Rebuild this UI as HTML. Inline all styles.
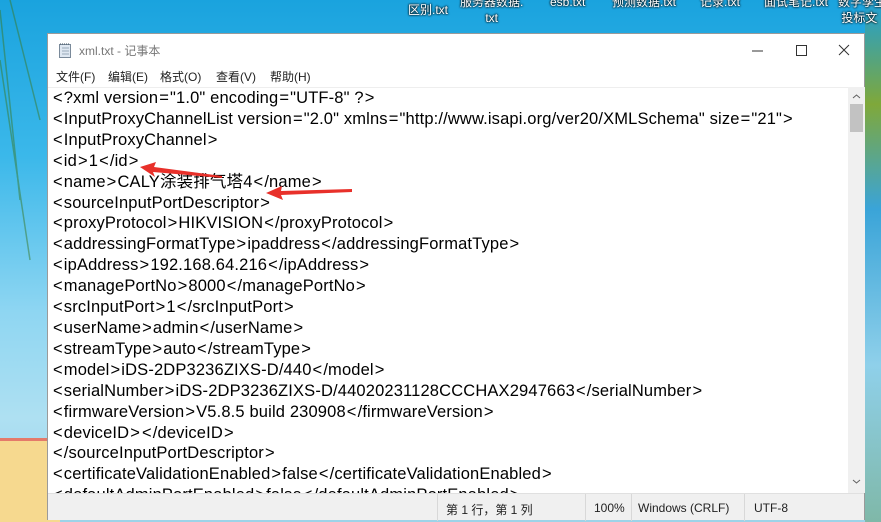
<!DOCTYPE html>
<html><head><meta charset="utf-8">
<style>
*{margin:0;padding:0;box-sizing:border-box}
html,body{width:881px;height:522px;overflow:hidden}
body{position:relative;font-family:"Liberation Sans","Noto Sans CJK SC",sans-serif;
background:linear-gradient(180deg,#1aa3de 0%,#3bb8ea 30%,#8fd6f2 60%,#aee0f2 80%,#9dd3e8 100%);}
.sand{position:absolute;left:0;top:438px;width:60px;height:84px;background:#f6d98f;border-top:3px solid #e47a6a}
.sandr{position:absolute;left:865px;top:0;width:16px;height:522px;background:linear-gradient(180deg,#1e9fd8 0%,#7fa83a 20%,#3aa4d8 40%,#8fd0ea 70%,#7fb8a8 100%)}
.dk{position:absolute;color:#fff;font-size:12px;text-shadow:0 0 2px #000,0 0 2px #000;text-align:center;line-height:16px;white-space:nowrap}
.win{position:absolute;left:47px;top:33px;width:818px;height:487px;background:#fff;border:1px solid #9a9a9a}
.title{height:31px;position:relative;font-size:12px;color:#777}
.title span{position:absolute;left:31px;top:8px}
.menu{height:22px;font-size:12px;color:#222;position:relative}
.menu span{position:absolute;top:3px}
.txt{position:absolute;left:0;top:53px;width:800px;height:406px;overflow:hidden;border-top:1px solid #eee}
.txt pre{font-family:"Liberation Sans","Noto Sans CJK SC",sans-serif;font-size:16.5px;line-height:20.9px;color:#000;padding:0 0 0 4px;letter-spacing:0.15px}
.txt pre i{font-style:normal;margin:0 1px}
.sb{position:absolute;left:800px;top:53px;width:17px;height:406px;background:#f0f0f0}
.status{position:absolute;left:0;top:459px;width:816px;height:27px;background:#f0f0f0;border-top:1px solid #e0e0e0;font-size:12px;color:#222}
.status span{position:absolute;top:7px}
.sep{position:absolute;top:0;width:1px;height:27px;background:#d8d8d8}
</style></head><body>
<svg style="position:absolute;left:0;top:0" width="60" height="440"><g stroke="#3a7a2a" stroke-width="1.5" opacity=".5" fill="none"><path d="M0 10 L20 200"/><path d="M10 0 L40 120"/><path d="M0 60 L30 260"/></g></svg>
<div class="sand"></div>
<div class="sandr"></div>
<div class="dk" style="left:408px;top:2px">区别.txt</div>
<div class="dk" style="left:460px;top:-6px">服务器数据.<br>txt</div>
<div class="dk" style="left:550px;top:-6px">esb.txt</div>
<div class="dk" style="left:612px;top:-6px">预测数据.txt</div>
<div class="dk" style="left:700px;top:-6px">记录.txt</div>
<div class="dk" style="left:764px;top:-6px">面试笔记.txt</div>
<div class="dk" style="left:838px;top:-6px;text-align:left">数字孪生<br>&nbsp;投标文</div>
<div class="win">
 <div class="title">
  <svg style="position:absolute;left:10px;top:8px" width="14" height="16"><rect x="1.5" y="2.5" width="11" height="13" fill="#dfe8f2" stroke="#7a8a9a"/><path d="M2 2h10" stroke="#456" stroke-dasharray="1 1"/><path d="M4 6h7M4 9h7M4 12h7" stroke="#9ab"/></svg>
  <span>xml.txt - 记事本</span>
  <svg style="position:absolute;left:695px;top:9px" width="140" height="14"><path d="M9 8h11" stroke="#333"/><rect x="53.5" y="2.5" width="10" height="10" fill="none" stroke="#333"/><path d="M96 2l10 10M106 2l-10 10" stroke="#333"/></svg>
 </div>
 <div class="menu"><span style="left:8px">文件(F)</span><span style="left:60px">编辑(E)</span><span style="left:112px">格式(O)</span><span style="left:168px">查看(V)</span><span style="left:222px">帮助(H)</span></div>
 <div class="txt"><pre><i>&lt;</i>?xml version<i>=</i>"1.0" encoding<i>=</i>"UTF-8" ?<i>&gt;</i>
<i>&lt;</i>InputProxyChannelList version<i>=</i>"2.0" xmlns<i>=</i>"http://www.isapi.org/ver20/XMLSchema" size<i>=</i>"21"<i>&gt;</i>
<i>&lt;</i>InputProxyChannel<i>&gt;</i>
<i>&lt;</i>id<i>&gt;</i>1<i>&lt;</i>/id<i>&gt;</i>
<i>&lt;</i>name<i>&gt;</i>CALY涂装排气塔4<i>&lt;</i>/name<i>&gt;</i>
<i>&lt;</i>sourceInputPortDescriptor<i>&gt;</i>
<i>&lt;</i>proxyProtocol<i>&gt;</i>HIKVISION<i>&lt;</i>/proxyProtocol<i>&gt;</i>
<i>&lt;</i>addressingFormatType<i>&gt;</i>ipaddress<i>&lt;</i>/addressingFormatType<i>&gt;</i>
<i>&lt;</i>ipAddress<i>&gt;</i>192.168.64.216<i>&lt;</i>/ipAddress<i>&gt;</i>
<i>&lt;</i>managePortNo<i>&gt;</i>8000<i>&lt;</i>/managePortNo<i>&gt;</i>
<i>&lt;</i>srcInputPort<i>&gt;</i>1<i>&lt;</i>/srcInputPort<i>&gt;</i>
<i>&lt;</i>userName<i>&gt;</i>admin<i>&lt;</i>/userName<i>&gt;</i>
<i>&lt;</i>streamType<i>&gt;</i>auto<i>&lt;</i>/streamType<i>&gt;</i>
<i>&lt;</i>model<i>&gt;</i>iDS-2DP3236ZIXS-D/440<i>&lt;</i>/model<i>&gt;</i>
<i>&lt;</i>serialNumber<i>&gt;</i>iDS-2DP3236ZIXS-D/44020231128CCCHAX2947663<i>&lt;</i>/serialNumber<i>&gt;</i>
<i>&lt;</i>firmwareVersion<i>&gt;</i>V5.8.5 build 230908<i>&lt;</i>/firmwareVersion<i>&gt;</i>
<i>&lt;</i>deviceID<i>&gt;</i><i>&lt;</i>/deviceID<i>&gt;</i>
<i>&lt;</i>/sourceInputPortDescriptor<i>&gt;</i>
<i>&lt;</i>certificateValidationEnabled<i>&gt;</i>false<i>&lt;</i>/certificateValidationEnabled<i>&gt;</i>
<i>&lt;</i>defaultAdminPortEnabled<i>&gt;</i>false<i>&lt;</i>/defaultAdminPortEnabled<i>&gt;</i></pre></div>
 <div class="sb">
  <svg width="17" height="406"><path d="M5 11l3.5-3 3.5 3" stroke="#606060" fill="none"/><rect x="2" y="17" width="13" height="28" fill="#c2c2c2"/><path d="M5 393l3.5 3 3.5-3" stroke="#606060" fill="none"/></svg>
 </div>
 <div class="status">
  <div class="sep" style="left:389px"></div><span style="left:398px">第 1 行，第 1 列</span>
  <div class="sep" style="left:537px"></div><span style="left:546px">100%</span>
  <div class="sep" style="left:583px"></div><span style="left:590px">Windows (CRLF)</span>
  <div class="sep" style="left:696px"></div><span style="left:706px">UTF-8</span>
 </div>
</div>
<svg style="position:absolute;left:0;top:0" width="881" height="522">
 <g fill="#e8302a">
  <path d="M140 167 L156 162 L154 167 L222 176 L222 178 L153 172 L155 177 Z"/>
  <path d="M266 193 L282 186 L281 191 L352 189 L352 192 L281 195 L283 200 Z"/>
 </g>
</svg>
</body></html>
